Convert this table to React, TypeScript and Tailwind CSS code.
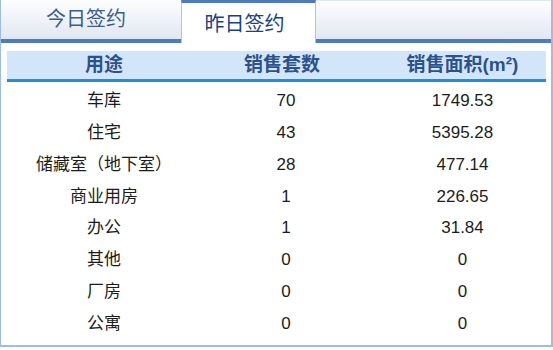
import React from 'react';

type Row = { use: string; count: string; area: string };

const rows: Row[] = [
  { use: '车库', count: '70', area: '1749.53' },
  { use: '住宅', count: '43', area: '5395.28' },
  { use: '储藏室（地下室）', count: '28', area: '477.14' },
  { use: '商业用房', count: '1', area: '226.65' },
  { use: '办公', count: '1', area: '31.84' },
  { use: '其他', count: '0', area: '0' },
  { use: '厂房', count: '0', area: '0' },
  { use: '公寓', count: '0', area: '0' },
];

const font = 'font-["Liberation_Sans","Noto_Sans_CJK_SC",sans-serif]';

export default function App() {
  return (
    <div className={`w-[553px] h-[350px] bg-white ${font}`}>
      <div className="w-[553px] h-[347px] flex flex-col border-l border-r-2 border-b-2 border-[#9cbdec]">
        {/* tabs */}
        <div className="flex h-[43px] shrink-0">
          <div className="w-[180px] flex items-center justify-center pr-[10px] pb-[2px] bg-gradient-to-b from-[#fdfeff] to-[#e1e7f1] border-b-4 border-[#4d7bc0] text-[20px] text-[#3e5d8c]">
            今日签约
          </div>
          <div className="w-[135px] flex items-center justify-center pr-2 pt-[1px] bg-white border-t-[3px] border-[#4d7bc0] border-x border-x-[#a9c5ee] text-[20px] text-[#16428a]">
            昨日签约
          </div>
          <div className="flex-1 bg-gradient-to-b from-[#fdfeff] to-[#e1e7f1] border-b-4 border-[#4d7bc0] border-t border-t-[#dfe8f6]" />
        </div>

        {/* table */}
        <div className="flex-1 pl-[6px] pr-[5px] pt-[8px]">
          <div className="grid grid-cols-[194px_170px_1fr] h-[31px] items-center bg-[#d3e6f9] border-b-[3px] border-[#1b91d9] text-[19px] font-bold text-[#2b5190]">
            <div className="text-center">用途</div>
            <div className="text-center pr-2">销售套数</div>
            <div className="text-center pl-2">销售面积(m²)</div>
          </div>
          <div className="pt-[3px]">
            {rows.map((r) => (
              <div
                key={r.use}
                className="grid grid-cols-[194px_170px_1fr] h-[31.8px] items-center text-[17px] text-[#1c1c1c]"
              >
                <div className="text-center">{r.use}</div>
                <div className="text-center">{r.count}</div>
                <div className="text-center pl-2">{r.area}</div>
              </div>
            ))}
          </div>
        </div>
      </div>
    </div>
  );
}
